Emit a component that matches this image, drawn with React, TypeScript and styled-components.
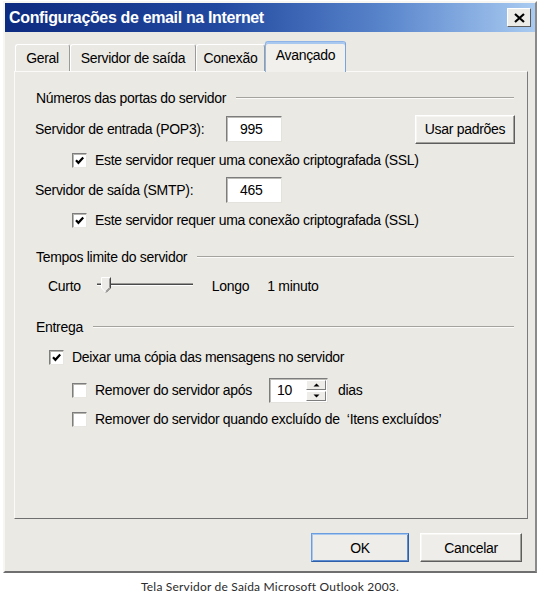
import React from "react";
import styled, { createGlobalStyle } from "styled-components";

const FACE = `"Liberation Sans", Arial, sans-serif`;

const Global = createGlobalStyle`
  html, body { margin: 0; padding: 0; background: #ffffff; }
  body { font-family: ${FACE}; color: #000; letter-spacing: -0.3px; }
  * { box-sizing: border-box; }
`;

const Page = styled.div`
  width: 540px;
  height: 600px;
  padding-top: 1px;
  background: #ffffff;
`;

const Window = styled.div`
  margin-left: 3px;
  width: 534px;
  height: 572px;
  display: flex;
  flex-direction: column;
  background: #ebe9e4;
  border: 2px solid;
  border-color: #f7f6f3 #8a8a8a #6f6f6f #f7f6f3;
`;

const TitleBar = styled.div`
  height: 29px;
  display: flex;
  align-items: center;
  justify-content: space-between;
  padding: 0 4px 0 4px;
  background: linear-gradient(90deg, #0d2b80 0%, #21489f 40%, #5a86cc 72%, #a9cbf1 100%);
`;

const Title = styled.span`
  color: #ffffff;
  font-weight: bold;
  font-size: 16px;
  letter-spacing: -0.35px;
`;

const CloseButton = styled.button`
  width: 24px;
  height: 19px;
  padding: 0;
  display: flex;
  align-items: center;
  justify-content: center;
  background: #ecebe7;
  border: 1px solid;
  border-color: #ffffff #5c5c5c #5c5c5c #ffffff;
`;

const Body = styled.div`
  flex: 1;
  display: flex;
  flex-direction: column;
  padding: 8px 7px 9px 9px;
`;

const TabStrip = styled.div`
  height: 31px;
  display: flex;
  align-items: flex-end;
  padding-left: 1px;
`;

const Tab = styled.div<{ $active?: boolean; $w: number }>`
  width: ${(p) => p.$w}px;
  height: ${(p) => (p.$active ? 31 : 27)}px;
  display: flex;
  align-items: center;
  justify-content: center;
  padding-bottom: ${(p) => (p.$active ? 4 : 0)}px;
  font-size: 14px;
  background: ${(p) => (p.$active ? "#f1f0ec" : "#ebe9e4")};
  border: 1px solid;
  border-bottom: none;
  border-radius: 3px 3px 0 0;
  border-color: ${(p) =>
    p.$active ? "#8fb4e8 #7aa2dc #7aa2dc #8fb4e8" : "#ffffff #9a9a9a #9a9a9a #ffffff"};
  box-shadow: ${(p) => (p.$active ? "inset 0 2px 0 #a9c8ef" : "none")};
  position: relative;
  margin-bottom: ${(p) => (p.$active ? "-1px" : "0")};
  z-index: ${(p) => (p.$active ? 1 : 0)};
`;

const Panel = styled.div`
  height: 448px;
  display: flex;
  flex-direction: column;
  padding: 12px 12px 0 20px;
  background: #ebe9e4;
  border: 1px solid;
  border-color: #fbfaf8 #7b7b7b #6f6f6f #fbfaf8;
`;

const Row = styled.div<{ $mt?: number; $indent?: number }>`
  height: 28px;
  display: flex;
  align-items: center;
  margin-top: ${(p) => p.$mt ?? 0}px;
  padding-left: ${(p) => p.$indent ?? 0}px;
  font-size: 14px;
`;

const GroupTitle = styled.span`
  font-size: 14px;
  padding-left: 1px;
  margin-right: 10px;
  white-space: nowrap;
`;

const Rule = styled.div`
  flex: 1;
  height: 2px;
  margin-right: 1px;
  border-top: 1px solid #a5a39e;
  border-bottom: 1px solid #fbfaf8;
`;

const FieldLabel = styled.span`
  width: 191px;
  white-space: nowrap;
`;

const TextBox = styled.div<{ $w: number; $h: number }>`
  width: ${(p) => p.$w}px;
  height: ${(p) => p.$h}px;
  display: flex;
  align-items: center;
  padding-left: 13px;
  background: #ffffff;
  border: 1px solid;
  border-color: #7c7c7c #e4e2dd #e4e2dd #7c7c7c;
  box-shadow: inset 1px 1px 0 #bdbbb6;
  font-size: 14px;
`;

const Spacer = styled.div`
  flex: 1;
`;

const PushButton = styled.button<{ $w: number; $focus?: boolean }>`
  width: ${(p) => p.$w}px;
  height: 29px;
  padding: 0;
  font-family: ${FACE};
  font-size: 14px;
  letter-spacing: -0.3px;
  color: #000;
  background: #eeede9;
  border: 1px solid;
  border-color: ${(p) =>
    p.$focus ? "#6a9de0 #2f5fa9 #2f5fa9 #6a9de0" : "#ffffff #5d5d5d #5d5d5d #ffffff"};
  box-shadow: ${(p) =>
    p.$focus
      ? "inset 1px 1px 0 #a8c8f0, inset -1px -1px 0 #5d8cd0"
      : "inset -1px -1px 0 #a3a19c, inset 1px 1px 0 #f7f6f3"};
`;

const Box = styled.span`
  width: 15px;
  height: 15px;
  flex: none;
  display: flex;
  align-items: center;
  justify-content: center;
  background: #ffffff;
  border: 1px solid;
  border-color: #7d7d7d #e8e6e1 #e8e6e1 #7d7d7d;
  box-shadow: inset 1px 1px 0 #b7b5b0;
  margin-right: 8px;
`;

const Check = ({ on }: { on?: boolean }) => (
  <Box>
    {on && (
      <svg width="11" height="11" viewBox="0 0 11 11">
        <path d="M2 5.3 L4.4 7.8 L9.2 2.6" fill="none" stroke="#000" strokeWidth="2.2" />
      </svg>
    )}
  </Box>
);

const SliderWrap = styled.div`
  width: 98px;
  height: 20px;
  margin: 0 18px 0 15px;
  flex: none;
`;

const SmallText = styled.span<{ $ml?: number }>`
  margin-left: ${(p) => p.$ml ?? 0}px;
  white-space: nowrap;
`;

const Spin = styled.div`
  width: 59px;
  height: 25px;
  display: flex;
  background: #ffffff;
  border: 1px solid;
  border-color: #7c7c7c #e4e2dd #e4e2dd #7c7c7c;
  box-shadow: inset 1px 1px 0 #bdbbb6;
  margin-left: 17px;
  margin-right: 10px;
`;

const SpinValue = styled.div`
  flex: 1;
  display: flex;
  align-items: center;
  padding-left: 7px;
  font-size: 14px;
`;

const SpinButtons = styled.div`
  width: 21px;
  display: flex;
  flex-direction: column;
  padding: 1px 1px 1px 0;
  gap: 1px;
`;

const SpinButton = styled.div`
  flex: 1;
  display: flex;
  align-items: center;
  justify-content: center;
  background: #eeede9;
  border: 1px solid;
  border-color: #ffffff #7d7d7d #7d7d7d #ffffff;
`;

const Footer = styled.div`
  display: flex;
  justify-content: flex-end;
  gap: 11px;
  margin-top: 14px;
  padding-right: 6px;
`;

const Caption = styled.div`
  margin-top: 6px;
  text-align: center;
  font-family: Lato, "Open Sans", sans-serif;
  font-size: 12px;
  color: #2b2b2b;
  letter-spacing: 0.2px;
`;

const Slider = () => (
  <svg width="98" height="20" viewBox="0 0 98 20">
    <line x1="1" y1="7.5" x2="97" y2="7.5" stroke="#9b9995" strokeWidth="1" />
    <line x1="1" y1="8.5" x2="97" y2="8.5" stroke="#4a4a4a" strokeWidth="1" />
    <line x1="1" y1="9.5" x2="97" y2="9.5" stroke="#ffffff" strokeWidth="1" />
    <path d="M5.5 1.5 H14.5 V12 L10 16.5 L5.5 12 Z" fill="#ecebe7" stroke="#ffffff" strokeWidth="1" />
    <path d="M14.5 1.5 V12 L10 16.5" fill="none" stroke="#444" strokeWidth="1" />
    <path d="M13.5 2.5 V11.6 L10 15.2" fill="none" stroke="#9b9995" strokeWidth="1" />
  </svg>
);

const Arrow = ({ up }: { up?: boolean }) => (
  <svg width="7" height="4" viewBox="0 0 7 4">
    <path d={up ? "M0.5 3.5 L3.5 0.5 L6.5 3.5 Z" : "M0.5 0.5 L3.5 3.5 L6.5 0.5 Z"} fill="#000" />
  </svg>
);

export default function App() {
  return (
    <Page>
      <Global />
      <Window>
        <TitleBar>
          <Title>Configurações de email na Internet</Title>
          <CloseButton aria-label="Fechar">
            <svg width="11" height="10" viewBox="0 0 11 10">
              <path d="M1 1 L10 9 M10 1 L1 9" stroke="#000" strokeWidth="2.2" />
            </svg>
          </CloseButton>
        </TitleBar>
        <Body>
          <TabStrip>
            <Tab $w={55}>Geral</Tab>
            <Tab $w={126}>Servidor de saída</Tab>
            <Tab $w={69}>Conexão</Tab>
            <Tab $w={81} $active>
              Avançado
            </Tab>
          </TabStrip>
          <Panel>
            <Row>
              <GroupTitle>Números das portas do servidor</GroupTitle>
              <Rule />
            </Row>
            <Row $mt={3}>
              <FieldLabel>Servidor de entrada (POP3):</FieldLabel>
              <TextBox $w={56} $h={26}>995</TextBox>
              <Spacer />
              <PushButton $w={100}>Usar padrões</PushButton>
            </Row>
            <Row $mt={3} $indent={37}>
              <Check on />
              <span>Este servidor requer uma conexão criptografada (SSL)</span>
            </Row>
            <Row $mt={2}>
              <FieldLabel>Servidor de saída (SMTP):</FieldLabel>
              <TextBox $w={56} $h={26}>465</TextBox>
            </Row>
            <Row $mt={2} $indent={37}>
              <Check on />
              <span>Este servidor requer uma conexão criptografada (SSL)</span>
            </Row>
            <Row $mt={9}>
              <GroupTitle>Tempos limite do servidor</GroupTitle>
              <Rule />
            </Row>
            <Row $mt={1} $indent={13}>
              <SmallText>Curto</SmallText>
              <SliderWrap>
                <Slider />
              </SliderWrap>
              <SmallText>Longo</SmallText>
              <SmallText $ml={18}>1 minuto</SmallText>
            </Row>
            <Row $mt={13}>
              <GroupTitle>Entrega</GroupTitle>
              <Rule />
            </Row>
            <Row $mt={2} $indent={14}>
              <Check on />
              <span>Deixar uma cópia das mensagens no servidor</span>
            </Row>
            <Row $mt={5} $indent={37}>
              <Check />
              <span>Remover do servidor após</span>
              <Spin>
                <SpinValue>10</SpinValue>
                <SpinButtons>
                  <SpinButton>
                    <Arrow up />
                  </SpinButton>
                  <SpinButton>
                    <Arrow />
                  </SpinButton>
                </SpinButtons>
              </Spin>
              <span>dias</span>
            </Row>
            <Row $mt={1} $indent={37}>
              <Check />
              <span>Remover do servidor quando excluído de &nbsp;‘Itens excluídos’</span>
            </Row>
          </Panel>
          <Footer>
            <PushButton $w={98} $focus>
              OK
            </PushButton>
            <PushButton $w={102}>Cancelar</PushButton>
          </Footer>
        </Body>
      </Window>
      <Caption>Tela Servidor de Saída Microsoft Outlook 2003.</Caption>
    </Page>
  );
}
